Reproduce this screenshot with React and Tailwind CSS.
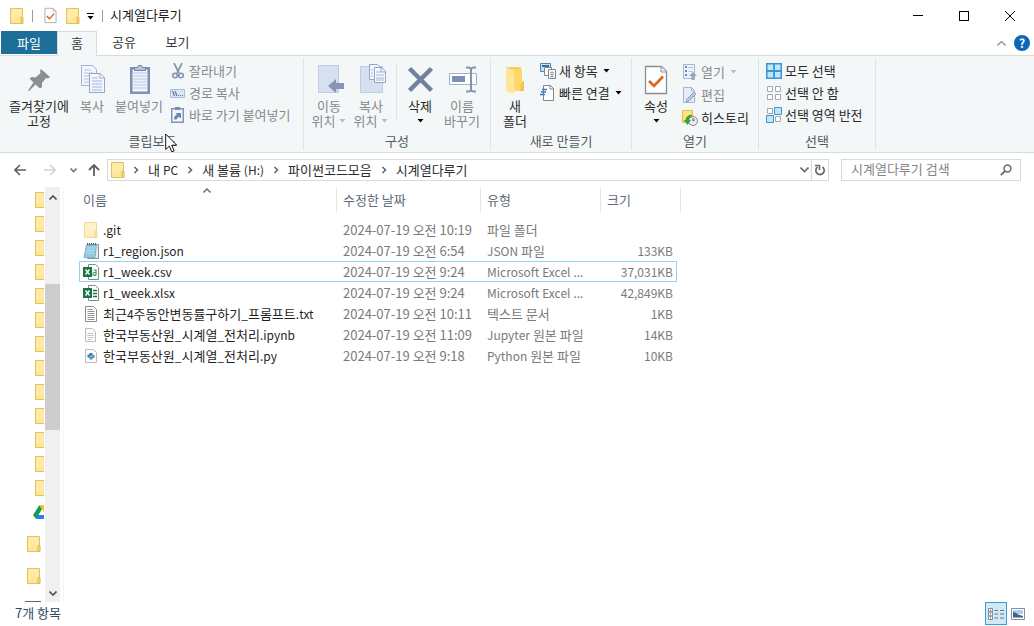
import React from "react";

function FolderIcon({ className = "" }) {
    return (
        <svg viewBox="0 0 14 16" className={`h-4 w-[14px] shrink-0 ${className}`} aria-hidden="true">
            <path d="M.5.5h12v15H.5z" fill="#ffe695" stroke="#e3c25c" />
            <path d="M1 1h11v7L1 12z" fill="#ffeba6" />
            <path d="M11 9.500h2v6h-2z" fill="#fbdc78" stroke="#dcb94f" />
        </svg>
    );
}

function CheckDocIcon({ className = "" }) {
    return (
        <svg viewBox="0 0 24 32" className={className} aria-hidden="true">
            <path d="M1.500 2.500h16l5 5v22h-21z" fill="#fff" stroke="#8b8f94" strokeWidth="1.300" />
            <path d="M17 2.500V8h5.500" fill="#eceff1" stroke="#8b8f94" />
            <path d="M5 17l5 5 9-9.500" fill="none" stroke="#e0601c" strokeWidth="2.600" />
        </svg>
    );
}

function Caret({ className = "" }) {
    return (
        <svg viewBox="0 0 7 4" className={`h-1 w-[7px] shrink-0 ${className}`} aria-hidden="true">
            <path d="M.5 0h6l-3 3.500z" fill="currentColor" />
        </svg>
    );
}

function Chevron({ className = "", d = "M1.500 1l3 3-3 3", box = "0 0 6 8" }) {
    return (
        <svg viewBox={box} className={className} aria-hidden="true">
            <path d={d} fill="none" stroke="currentColor" strokeWidth="1.600" />
        </svg>
    );
}

/* Latin runs are set a step smaller than the Hangul around them */
function Mixed({ text }) {
    return (
        <span className="whitespace-pre">
            {text.split(/([!-~]+)/).map((part, i) =>
                i % 2 ? (
                    <span key={i} className="text-xs leading-none">
                        {part}
                    </span>
                ) : (
                    part
                )
            )}
        </span>
    );
}

/* ---- large ribbon icons, 32px grid ---- */

function PinIcon() {
    return (
        <svg viewBox="0 0 32 32" className="h-8 w-8" aria-hidden="true">
            <path d="M18 5l9 8-2 1.500-2-.500-4 5v4l-2 1.500-4.500-4L6 27l-1-.500 5.500-8-4-4L8.500 13l4 .500 5-4.500-.500-2z" fill="#8a8f94" />
        </svg>
    );
}

function CopyIcon() {
    return (
        <svg viewBox="0 0 32 32" className="h-8 w-8" aria-hidden="true">
            <path d="M5.500 1.500h11l4 4v16h-15z" fill="#f3f6fc" stroke="#a3b1cd" />
            <path d="M8 6h7M8 9h9M8 12h9M8 15h9M8 18h9" stroke="#b5c4e4" />
            <path d="M13.500 9.500h11l4 4v15h-15z" fill="#f3f6fc" stroke="#94a5c6" />
            <path d="M24 9.500V14h4.500" fill="#fff" stroke="#94a5c6" />
            <path d="M16 14h6M16 17h10M16 20h10M16 23h10M16 26h10" stroke="#9fb3de" />
        </svg>
    );
}

function PasteIcon() {
    return (
        <svg viewBox="0 0 32 32" className="h-8 w-8" aria-hidden="true">
            <path d="M7 3h20v27H7z" fill="#7f8fb6" />
            <path d="M9.500 5.500h15v22h-15z" fill="#f0f4fb" />
            <path d="M10 9h14M10 12h14M10 15h14M10 18h14M10 21h14M10 24h14" stroke="#b9c6e2" />
            <path d="M11.500 3.500h3l1-2h3l1 2h3v3h-11z" fill="#b9c3d4" stroke="#74829f" />
        </svg>
    );
}

function MoveToIcon() {
    return (
        <svg viewBox="0 0 32 32" className="h-8 w-8" aria-hidden="true">
            <path d="M5.500 1.500h20v27h-20z" fill="#d7e0f0" stroke="#c0cce2" />
            <path d="M22 18h3v10h-3z" fill="#c8d4e8" />
            <path d="M15 22l8-7v4h8v6h-8v4z" fill="#8796b4" />
        </svg>
    );
}

function CopyToIcon() {
    return (
        <svg viewBox="0 0 32 32" className="h-8 w-8" aria-hidden="true">
            <path d="M5.500 2.500h22v26h-22z" fill="#d7e0f0" stroke="#c0cce2" />
            <path d="M14.500.500h8l3 3v12h-11z" fill="#f3f6fc" stroke="#94a5c6" />
            <path d="M19.500 3.500h7l4 4v11h-11z" fill="#f7f9fd" stroke="#94a5c6" />
            <path d="M21 8h5M21 11h8M21 14h8M21 16h8M16 6h2M16 9h2M16 12h2" stroke="#9fb3de" />
            <path d="M26 3.500V8h4.500" fill="none" stroke="#94a5c6" />
        </svg>
    );
}

function DeleteIcon() {
    return (
        <svg viewBox="0 0 32 32" className="h-8 w-8" aria-hidden="true">
            <path d="M5.500 4.500l22 22M27.500 4.500l-22 22" stroke="#72809d" strokeWidth="4.500" />
        </svg>
    );
}

function RenameIcon() {
    return (
        <svg viewBox="0 0 32 32" className="h-8 w-8" aria-hidden="true">
            <path d="M3.500 9.500h27v11h-27z" fill="#fff" stroke="#a4b0c6" />
            <path d="M6 12h13v6H6z" fill="#7c8fb5" />
            <path d="M20 3.500h2.500q2 0 2.500 2 .500-2 2.500-2H30M25 5v21M20 27.500h2.500q2 0 2.500-2 .500 2 2.500 2H30" fill="none" stroke="#8793a9" strokeWidth="2" />
        </svg>
    );
}

function NewFolderIcon() {
    return (
        <svg viewBox="0 0 32 32" className="h-8 w-8" aria-hidden="true">
            <path d="M7 3h15v14h2v10H7z" fill="#f6cd62" />
            <path d="M13 5h10v12h2v10H13z" fill="#ffd766" />
            <path d="M7 3l8 4v23l-8-3z" fill="#ffe699" />
            <path d="M23 18h2v9h-4z" fill="#eec258" />
        </svg>
    );
}

/* ---- small ribbon icons, 16px grid ---- */

function Small({ children }) {
    return (
        <svg viewBox="0 0 16 16" className="h-4 w-4 shrink-0" aria-hidden="true">
            {children}
        </svg>
    );
}

const cutIcon = (
    <Small>
        <path d="M4 0l5 10M12 0L7 10" stroke="#8b94a3" strokeWidth="1.700" />
        <circle cx="5" cy="12.500" r="2.300" fill="none" stroke="#7c8fb5" strokeWidth="1.500" />
        <circle cx="11" cy="12.500" r="2.300" fill="none" stroke="#7c8fb5" strokeWidth="1.500" />
    </Small>
);

const pathIcon = (
    <Small>
        <path d="M.5 4.500h14v8H.5z" fill="#dbe5f4" stroke="#aebcd6" />
        <path d="M2.500 6l2 5M5 6l2 5" stroke="#66789c" strokeWidth="1.200" />
        <path d="M8 10.500h1M10 10.500h1M12 10.500h1" stroke="#66789c" />
    </Small>
);

const shortcutIcon = (
    <Small>
        <path d="M1.750 1.750h11.500v13.500H1.750z" fill="#f3f7fd" stroke="#8193bb" strokeWidth="1.500" />
        <path d="M5 0h5v3H5z" fill="#7a8bae" />
        <path d="M4 12.500q0-4 3-5L5.500 6H11v5.500L9.500 10Q7 10 6.500 12.500z" fill="#6d84b5" />
    </Small>
);

const newItemIcon = (
    <Small>
        <path d="M.5.5h10v8H.5z" fill="#bfe0f5" stroke="#4b87b0" />
        <path d="M2 3h7" stroke="#2f74a8" strokeWidth="2" />
        <path d="M4.500 4.500h7v8h-7z" fill="#fff" stroke="#7d8790" />
        <path d="M8.500 6.500h7v9h-7z" fill="#fff" stroke="#7d8790" />
        <path d="M10 9.500h4M10 11.500h4M10 13.500h4M12 8v7" stroke="#a0aab2" />
    </Small>
);

const easyAccessIcon = (
    <Small>
        <path d="M3.500.5h7l3 3v12h-10z" fill="#fff" stroke="#7d8790" />
        <path d="M10 .5V4h3.500" fill="none" stroke="#7d8790" />
        <path d="M2 4.500h5M1 7h5M0 9.500h5" stroke="#2f7fc0" strokeWidth="1.400" />
    </Small>
);

const openIcon = (
    <Small>
        <path d="M1.500.5h11v14h-11z" fill="#eef3fa" stroke="#aab7cf" />
        <path d="M3 3h2M3 7h2M3 11h2" stroke="#6f86b6" strokeWidth="2" />
        <path d="M6.500 3.500H11M6.500 7.500H11" stroke="#b4c0d6" />
        <path d="M11 8l4 4h-2.500v4h-3v-4H7z" fill="#98a6c0" />
    </Small>
);

const editIcon = (
    <Small>
        <path d="M1.500.5h8l3 3v12h-11z" fill="#e6edf8" stroke="#a7b5d0" />
        <path d="M9.500.5v3.500h3" fill="none" stroke="#a7b5d0" />
        <path d="M12 5l2 2-7 7-3 1 1-3z" fill="#bac7dd" stroke="#95a5c4" />
    </Small>
);

const historyIcon = (
    <Small>
        <path d="M.5.5h10v12H.5z" fill="#ffe27a" stroke="#e2bd4c" />
        <circle cx="11" cy="11" r="4.500" fill="#e8eaec" stroke="#84898e" />
        <path d="M11 8v3l2-1.500" fill="none" stroke="#5c6166" />
        <path d="M10 4.500Q4 5 3.500 10H1.500L5.500 15l3.500-5H7q0-2.500 3-3.500z" fill="#3aa537" />
    </Small>
);

const selectAllIcon = (
    <Small>
        <path d="M.75.75h14.500v14.500H.750z" fill="#bfe6fb" stroke="#3b95d3" strokeWidth="1.500" />
        <path d="M8 1v14M1 8h14" stroke="#3b95d3" strokeWidth="1.800" />
    </Small>
);

const selectNoneIcon = (
    <Small>
        <path d="M1.500 1.500h5v5h-5zM9.500 1.500h5v5h-5zM1.500 9.500h5v5h-5zM9.500 9.500h5v5h-5z" fill="#fff" stroke="#a4a8ac" />
    </Small>
);

const invertIcon = (
    <Small>
        <path d="M1.500 1.500h5v5h-5zM9.500 9.500h5v5h-5z" fill="#fff" stroke="#a4a8ac" />
        <path d="M8.500.5h7v7h-7zM.5 8.500h7v7h-7z" fill="#bfe6fb" stroke="#3b95d3" />
    </Small>
);

function BigButton({ icon, lines, caret, width, muted }) {
    return (
        <button type="button" className={`flex flex-col items-center ${width} ${muted ? "text-[#85898e]" : "text-[#2b2b2b]"}`}>
            {icon}
            <span className="mt-0.5 text-[13px] leading-[15px] whitespace-nowrap">
                {lines.map((line, i) => (
                    <span key={line} className="flex items-center justify-center gap-1">
                        {line}
                        {caret === "inline" && i === lines.length - 1 && <Caret className="text-[#b8bbbe]" />}
                    </span>
                ))}
            </span>
            {caret === "below" && <Caret className="mt-1.5 text-black" />}
        </button>
    );
}

function SmallButton({ icon, label, caret, muted, height = "h-[22px]" }) {
    return (
        <button type="button" className={`flex items-center gap-[3px] whitespace-nowrap ${height} ${muted ? "text-[#85898e]" : "text-[#2b2b2b]"}`}>
            {icon}
            <span>{label}</span>
            {caret && <Caret className={muted ? "ml-0.5 text-[#b8bbbe]" : "ml-0.5 text-black"} />}
        </button>
    );
}

function Group({ label, width, children }) {
    return (
        <section aria-label={label} className={`my-0.5 flex shrink-0 flex-col border-r border-[#e1e4e6] ${width}`}>
            <div className="flex h-[75px] pt-0.5">{children}</div>
            <h2 className="text-center text-[13px] leading-[18px] text-[#55595e]">{label}</h2>
        </section>
    );
}

function TitleBar() {
    return (
        <header className="flex h-[31px] items-center">
            <FolderIcon className="ml-2.5" />
            <span className="ml-2 h-3 w-px bg-[#9a9a9a]" />
            <button type="button" aria-label="속성" className="ml-[11px]">
                <CheckDocIcon className="h-[17px] w-[13px]" />
            </button>
            <button type="button" aria-label="새 폴더" className="ml-[9px]">
                <FolderIcon />
            </button>
            <button type="button" aria-label="사용자 지정" className="ml-[7px] flex flex-col items-center gap-0.5 pt-0.5">
                <span className="h-px w-[7px] bg-black" />
                <Caret />
            </button>
            <span className="ml-2 h-3 w-px bg-[#9a9a9a]" />
            <h1 className="ml-[7px] flex-1 pb-px text-[13px] text-[#1a1a1a]">시계열다루기</h1>
            <div className="mr-px flex h-full">
                <button type="button" aria-label="최소화" className="flex w-[46px] items-center justify-center">
                    <span className="h-px w-2.5 bg-black" />
                </button>
                <button type="button" aria-label="최대화" className="flex w-[46px] items-center justify-center">
                    <span className="h-2.5 w-2.5 border border-black" />
                </button>
                <button type="button" aria-label="닫기" className="flex w-[46px] items-center justify-center">
                    <svg viewBox="0 0 10 10" className="h-2.5 w-2.5" aria-hidden="true">
                        <path d="M0 0l10 10M10 0L0 10" stroke="#000" />
                    </svg>
                </button>
            </div>
        </header>
    );
}

function Tabs() {
    return (
        <nav className="flex h-[25px] border-b border-[#dadbdc] pl-px text-[13px] text-[#3a3a3a]">
            <button type="button" className="h-[23px] w-14 bg-[#1b6f98] text-white">파일</button>
            <button type="button" className="h-[25px] w-10 border border-b-0 border-[#dadbdc] bg-[#f4f7f8] pb-0.5">홈</button>
            <button type="button" className="w-[54px] pb-0.5">공유</button>
            <button type="button" className="w-[53px] pb-0.5">보기</button>
            <div className="ml-auto flex items-center gap-2 pr-1">
                <button type="button" aria-label="리본 최소화">
                    <Chevron className="h-[5px] w-[9px] text-[#a0a0a0]" box="0 0 9 5" d="M.5 4.500l4-4 4 4" />
                </button>
                <button type="button" aria-label="도움말" className="h-4 w-4 rounded-full bg-[#0b67b8] text-[12px] leading-4 font-bold text-white">?</button>
            </div>
        </nav>
    );
}

function Ribbon() {
    return (
        <div className="flex h-[97px] overflow-hidden border-b border-[#dadbdc] bg-[#f4f7f8] pl-0.5 text-[13px]">
            <Group label="클립보드" width="w-[302px]">
                <div className="flex pt-1 pl-1.5">
                    <BigButton icon={<PinIcon />} lines={["즐겨찾기에", "고정"]} width="w-[62px]" />
                    <BigButton icon={<CopyIcon />} lines={["복사"]} width="w-11" muted />
                    <BigButton icon={<PasteIcon />} lines={["붙여넣기"]} width="w-[50px]" muted />
                </div>
                <div className="ml-1.5">
                    <SmallButton icon={cutIcon} label="잘라내기" muted />
                    <SmallButton icon={pathIcon} label="경로 복사" muted />
                    <SmallButton icon={shortcutIcon} label="바로 가기 붙여넣기" muted />
                </div>
            </Group>
            <Group label="구성" width="w-[187px]">
                <div className="flex pt-1 pl-1">
                    <BigButton icon={<MoveToIcon />} lines={["이동", "위치"]} width="w-[42px]" caret="inline" muted />
                    <BigButton icon={<CopyToIcon />} lines={["복사", "위치"]} width="w-[42px]" caret="inline" muted />
                    <span className="mx-1 h-14 w-px bg-[#e1e4e6]" />
                    <BigButton icon={<DeleteIcon />} lines={["삭제"]} width="w-[38px]" caret="below" />
                    <BigButton icon={<RenameIcon />} lines={["이름", "바꾸기"]} width="w-[46px]" muted />
                </div>
            </Group>
            <Group label="새로 만들기" width="w-[141px]">
                <div className="flex pt-1 pl-0.5">
                    <BigButton icon={<NewFolderIcon />} lines={["새", "폴더"]} width="w-11" />
                </div>
                <div className="ml-[3px]">
                    <SmallButton icon={newItemIcon} label="새 항목" caret />
                    <SmallButton icon={easyAccessIcon} label="빠른 연결" caret />
                </div>
            </Group>
            <Group label="열기" width="w-[127px]">
                <div className="flex pt-1 pl-1">
                    <BigButton icon={<CheckDocIcon className="h-8 w-6" />} lines={["속성"]} width="w-10" caret="below" />
                </div>
                <div className="ml-1.5">
                    <SmallButton icon={openIcon} label="열기" height="h-[23px]" caret muted />
                    <SmallButton icon={editIcon} label="편집" height="h-[23px]" muted />
                    <SmallButton icon={historyIcon} label="히스토리" height="h-[23px]" />
                </div>
            </Group>
            <Group label="선택" width="w-[117px]">
                <div className="ml-[7px]">
                    <SmallButton icon={selectAllIcon} label="모두 선택" />
                    <SmallButton icon={selectNoneIcon} label="선택 안 함" />
                    <SmallButton icon={invertIcon} label="선택 영역 반전" />
                </div>
            </Group>
        </div>
    );
}

const crumbs = ["내 PC", "새 볼륨 (H:)", "파이썬코드모음", "시계열다루기"];

function AddressBar() {
    return (
        <div className="flex h-[34px] items-center pr-[13px] text-[13px]">
            <button type="button" aria-label="뒤로" className="ml-3.5">
                <svg viewBox="0 0 12 12" className="h-3 w-3" aria-hidden="true">
                    <path d="M12 6H1.500M6 1L1 6l5 5" fill="none" stroke="#5f5f5f" strokeWidth="1.600" />
                </svg>
            </button>
            <button type="button" aria-label="앞으로" className="ml-[18px]">
                <svg viewBox="0 0 12 12" className="h-3 w-3" aria-hidden="true">
                    <path d="M0 6h10.500M6 1l5 5-5 5" fill="none" stroke="#d2d2d2" strokeWidth="1.600" />
                </svg>
            </button>
            <button type="button" aria-label="최근 위치" className="ml-3.5">
                <Chevron className="h-[5px] w-[7px] text-[#7a7a7a]" box="0 0 7 5" d="M.5.5l3 3 3-3" />
            </button>
            <button type="button" aria-label="위로" className="ml-[11px]">
                <svg viewBox="0 0 12 12" className="h-3 w-3" aria-hidden="true">
                    <path d="M6 12V1.500M1 6l5-5 5 5" fill="none" stroke="#5f5f5f" strokeWidth="1.800" />
                </svg>
            </button>
            <div className="ml-[7px] flex h-[22px] flex-1 items-center border border-[#d9d9d9] pl-[3px]">
                <FolderIcon />
                <ol className="-ml-px flex min-w-0 flex-1 items-center overflow-hidden whitespace-nowrap text-[#2b2b2b]">
                    {crumbs.map((crumb) => (
                        <li key={crumb} className="flex items-center">
                            <span className="flex w-6 justify-center">
                                <Chevron className="h-2 w-1.5 text-[#666]" />
                            </span>
                            <a href="#">
                                <Mixed text={crumb} />
                            </a>
                        </li>
                    ))}
                </ol>
                <button type="button" aria-label="이전 위치" className="px-0.5">
                    <Chevron className="h-1.5 w-[9px] text-[#6a6a6a]" box="0 0 9 6" d="M.5.5l4 4 4-4" />
                </button>
                <button type="button" aria-label="새로 고침" className="flex h-full w-[17px] items-center justify-center border-l border-[#d9d9d9]">
                    <svg viewBox="0 0 12 12" className="h-3 w-3" aria-hidden="true">
                        <path d="M8.500 3A4.200 4.200 0 1 1 3.500 3" fill="none" stroke="#6a6a6a" strokeWidth="1.700" />
                        <path d="M1 1.500h4.500V6" fill="none" stroke="#6a6a6a" strokeWidth="1.600" />
                    </svg>
                </button>
            </div>
            <div className="ml-3 flex h-[22px] w-[180px] items-center border border-[#d9d9d9] pr-2 pl-[9px]">
                <input
                    type="search"
                    aria-label="시계열다루기 검색"
                    placeholder="시계열다루기 검색"
                    className="min-w-0 flex-1 bg-transparent pb-0.5 outline-none placeholder:text-[#858585]"
                />
                <svg viewBox="0 0 12 12" className="h-3 w-3" aria-hidden="true">
                    <circle cx="7.500" cy="4.500" r="3.400" fill="none" stroke="#6a6a6a" strokeWidth="1.500" />
                    <path d="M5 7L.8 11.200" stroke="#6a6a6a" strokeWidth="1.800" />
                </svg>
            </div>
        </div>
    );
}

function Sidebar() {
    return (
        <aside className="flex w-16 shrink-0 border-r border-[#f5f5f5]">
            <ul className="w-11 overflow-hidden pt-px">
                {Array.from({ length: 13 }, (_, i) => (
                    <li key={i} className="flex h-6 items-center pl-[35px]">
                        <FolderIcon />
                    </li>
                ))}
                <li className="mb-1 flex h-6 items-center pl-[33px]">
                    <svg viewBox="0 0 18 14" className="h-3.5 w-[18px] shrink-0" aria-hidden="true">
                        <path d="M6.500 0L0 10l3 4 6-10z" fill="#109d58" />
                        <path d="M6.500 0h5l6.500 10h-5.500z" fill="#fbc116" />
                        <path d="M4.500 10H18l-2.500 4H3z" fill="#2f7de9" />
                    </svg>
                </li>
                <li className="flex h-8 items-center pl-[27px]">
                    <FolderIcon />
                </li>
                <li className="flex h-8 items-center pl-[27px]">
                    <FolderIcon />
                </li>
                <li className="pt-[9px] pl-[25px]">
                    <span className="block h-4 w-4 border-t border-[#56697c]" />
                </li>
            </ul>
            <div className="ml-px flex w-[15px] flex-col bg-[#f0f0f0]">
                <button type="button" aria-label="위로 스크롤" className="flex h-[17px] items-center justify-center pt-1">
                    <Chevron className="h-[5px] w-2 text-[#505050]" box="0 0 8 5" d="M.5 4.500l3.500-3.500 3.500 3.500" />
                </button>
                <span className="grow-[80]" />
                <span className="grow-[146] bg-[#cdcdcd]" />
                <span className="grow-[155]" />
                <button type="button" aria-label="아래로 스크롤" className="flex h-[17px] items-center justify-center">
                    <Chevron className="h-[5px] w-2 text-[#505050]" box="0 0 8 5" d="M.5.5l3.500 3.500 3.500-3.500" />
                </button>
            </div>
        </aside>
    );
}

function ExcelIcon({ csv }) {
    return (
        <Small>
            <path d="M5.500.5h7l3 3v12h-10z" fill="#fff" stroke="#7c8f85" />
            {csv ? (
                <path d="M10.500 6h2.500v5.500M13 8.500h-1.500q-1.500 0-1.500 1.500t1.500 1.300H13" fill="none" stroke="#3a9a67" strokeWidth="1.200" />
            ) : (
                <path d="M10 5.500h4M10 8.500h4M10 11.500h4" stroke="#1d7145" strokeWidth="1.300" />
            )}
            <path d="M0 3h9v10H0z" fill="#1d7145" />
            <path d="M2.500 5.500l4 5M6.500 5.500l-4 5" stroke="#fff" strokeWidth="1.400" />
        </Small>
    );
}

const icons = {
    folder: (
        <span className="flex w-4 justify-center opacity-60">
            <FolderIcon />
        </span>
    ),
    json: (
        <Small>
            <path d="M4.500 1.500h11v14h-11z" fill="#e8ecef" stroke="#8a9298" />
            <path d="M3.500 2h10L12 14.500H1z" fill="#8ecbe0" stroke="#7fb4c6" />
            <path d="M4 5h8M3.500 7.500h8M3 10h8" stroke="#b9e2ee" />
            <path d="M4 1h10" stroke="#56656d" strokeWidth="2" strokeDasharray="1 1" />
        </Small>
    ),
    csv: <ExcelIcon csv />,
    xlsx: <ExcelIcon />,
    txt: (
        <Small>
            <path d="M2.500.5h8l3 3v12h-11z" fill="#fff" stroke="#8c8c8c" />
            <path d="M4.500 3.500H10M4.500 5.500h7M4.500 7.500h7M4.500 9.500h7M4.500 11.500h7M4.500 13.500h7" stroke="#959595" />
        </Small>
    ),
    ipynb: (
        <Small>
            <path d="M2.500 1.500h7l3 3v10h-10z" fill="#fbfbfb" stroke="#bdbdbd" />
            <path d="M4.500 6.500h6M4.500 8.500h6M4.500 10.500h6M4.500 12.500h4" stroke="#c6c6c6" />
        </Small>
    ),
    py: (
        <Small>
            <path d="M2.500 1.500h8l3 3v10h-11z" fill="#fbfbfb" stroke="#bdbdbd" />
            <path d="M6.500 5h3v2.500h-2v2h-3v-3h2z" fill="#3f78a6" />
            <path d="M9.500 11.500h-3V9h2V7h3v3h-2z" fill="#4f94c0" />
        </Small>
    ),
};

const files = [
    { icon: "folder", name: ".git", date: "2024-07-19 오전 10:19", type: "파일 폴더", size: "" },
    { icon: "json", name: "r1_region.json", date: "2024-07-19 오전 6:54", type: "JSON 파일", size: "133KB" },
    { icon: "csv", name: "r1_week.csv", date: "2024-07-19 오전 9:24", type: "Microsoft Excel ...", size: "37,031KB", selected: true },
    { icon: "xlsx", name: "r1_week.xlsx", date: "2024-07-19 오전 9:24", type: "Microsoft Excel ...", size: "42,849KB" },
    { icon: "txt", name: "최근4주동안변동률구하기_프롬프트.txt", date: "2024-07-19 오전 10:11", type: "텍스트 문서", size: "1KB" },
    { icon: "ipynb", name: "한국부동산원_시계열_전처리.ipynb", date: "2024-07-19 오전 11:09", type: "Jupyter 원본 파일", size: "14KB" },
    { icon: "py", name: "한국부동산원_시계열_전처리.py", date: "2024-07-19 오전 9:18", type: "Python 원본 파일", size: "10KB" },
];

function FileTable() {
    const head = "flex h-[26px] items-center border-r border-[#e3e5e7] pb-0.5";
    return (
        <table className="w-[602px] table-fixed border-separate border-spacing-0 text-[13px] leading-[19px] whitespace-nowrap">
            <colgroup>
                <col className="w-[258px]" />
                <col className="w-36" />
                <col className="w-[120px]" />
                <col className="w-[76px]" />
                <col className="w-1" />
            </colgroup>
            <thead className="text-left text-[#5f6b78]">
                <tr className="h-8 align-top">
                    <th scope="col" className="relative p-0 font-normal">
                        <div className={`${head} pl-1`}>이름</div>
                        <Chevron className="absolute top-px left-[124px] h-[5px] w-2 text-[#7b7b7b]" box="0 0 8 5" d="M.5 4.500L4 1l3.500 3.500" />
                    </th>
                    <th scope="col" className="p-0 font-normal">
                        <div className={`${head} pl-1.5`}>수정한 날짜</div>
                    </th>
                    <th scope="col" className="p-0 font-normal">
                        <div className={`${head} pl-1.5`}>유형</div>
                    </th>
                    <th scope="col" colSpan={2} className="p-0 font-normal">
                        <div className={`${head} pl-1.5`}>크기</div>
                    </th>
                </tr>
            </thead>
            <tbody className="text-[#7a7a7a]">
                {files.map((file) => {
                    const edge = file.selected ? "border-[#99d1f0]" : "border-transparent";
                    return (
                        <tr key={file.name} className="h-[21px]">
                            <td className={`border-y border-l py-0 pr-0 pl-[3px] text-[#1f1f1f] ${edge}`}>
                                <span className="flex items-center gap-1">
                                    {icons[file.icon]}
                                    <Mixed text={file.name} />
                                </span>
                            </td>
                            <td className={`border-y py-0 pr-0 pl-1.5 ${edge}`}>{file.date}</td>
                            <td className={`border-y py-0 pr-0 pl-1.5 ${edge}`}>
                                <Mixed text={file.type} />
                            </td>
                            <td className={`border-y border-r py-0 pr-[3px] pl-0 text-right ${edge}`}>
                                <Mixed text={file.size} />
                            </td>
                            <td className="p-0" />
                        </tr>
                    );
                })}
            </tbody>
        </table>
    );
}

function StatusBar() {
    return (
        <footer className="flex h-6 items-start justify-between pr-[9px] pl-[15px] text-[13px] leading-[22px] text-[#33495e]">
            <span>7개 항목</span>
            <div className="flex items-center gap-1">
                <button type="button" aria-label="자세히" className="flex h-[23px] w-[22px] items-center justify-center border border-[#3a9fd4] bg-[#cfe9f7]">
                    <svg viewBox="0 0 16 14" className="h-3.5 w-4" aria-hidden="true">
                        <path d="M.5 1.500h4v3.500h-4zM.5 5h4v4h-4zM.5 9h4v3.500h-4z" fill="#fff" stroke="#8a8f93" />
                        <path d="M2 3.500h1M2 7h1M2 11h1" stroke="#444" />
                        <path d="M6.500 3.500H10M12 3.500h4M6.500 7H10M12 7h4M6.500 11H10M12 11h4" stroke="#6b7278" />
                    </svg>
                </button>
                <button type="button" aria-label="큰 아이콘">
                    <svg viewBox="0 0 14 12" className="h-3 w-3.5" aria-hidden="true">
                        <path d="M.5.5h13v11H.5z" fill="#fff" stroke="#8a8f93" />
                        <path d="M2 2h10v4H2z" fill="#a8cdf0" />
                        <path d="M2 4q3 0 5 2.500L12 8v1.500H2z" fill="#33658d" />
                    </svg>
                </button>
            </div>
        </footer>
    );
}

export default function App() {
    return (
        <div className="relative flex h-screen flex-col overflow-hidden bg-white font-['Noto_Sans_CJK_KR',sans-serif]">
            <TitleBar />
            <Tabs />
            <Ribbon />
            <AddressBar />
            <div className="flex min-h-0 flex-1">
                <Sidebar />
                <main className="min-w-0 flex-1 overflow-hidden pl-[15px]">
                    <FileTable />
                </main>
            </div>
            <StatusBar />
            <svg viewBox="0 0 13 20" className="pointer-events-none absolute top-[133px] left-[165px] h-5 w-[13px]" aria-hidden="true">
                <path d="M.7 1v15.500l3.600-3.400 2.500 5.700 2.400-1-2.500-5.600h5z" fill="#fff" stroke="#111" />
            </svg>
        </div>
    );
}
